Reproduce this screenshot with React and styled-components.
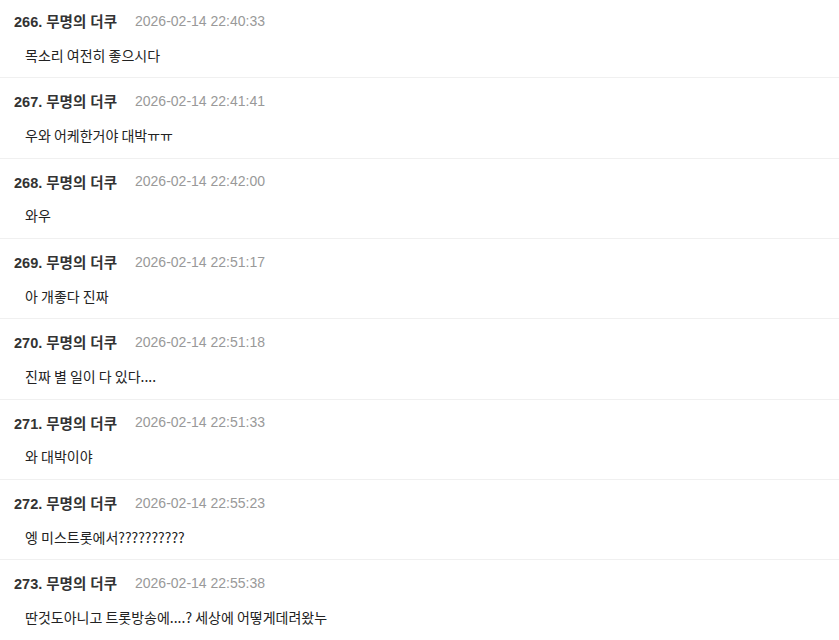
import styled, { createGlobalStyle } from "styled-components";

const Global = createGlobalStyle`
  body {
    margin: 0;
    background: #fff;
    font-family: "Noto Sans CJK KR", "Liberation Sans", sans-serif;
  }
`;

const List = styled.ul`
  list-style: none;
  margin: -2px 0 0;
  padding: 0;
`;

const Item = styled.li`
  padding: 12.67px 14px;
  border-bottom: 1px solid #f0f0f0;
`;

const Head = styled.div`
  display: flex;
  align-items: center;
  gap: 18px;
  height: 20px;
`;

const Name = styled.span`
  font-family: "Liberation Sans", "Noto Sans CJK KR", sans-serif;
  font-size: 14.5px;
  font-weight: 700;
  color: #333;
`;

const Date = styled.span`
  font-family: "Liberation Sans", sans-serif;
  font-size: 14px;
  color: #999;
`;

const Text = styled.p`
  margin: 14px 0 0 11px;
  height: 20px;
  line-height: 20px;
  font-size: 14px;
  color: #222;
`;

const comments = [
  [266, "2026-02-14 22:40:33", "목소리 여전히 좋으시다"],
  [267, "2026-02-14 22:41:41", "우와 어케한거야 대박ㅠㅠ"],
  [268, "2026-02-14 22:42:00", "와우"],
  [269, "2026-02-14 22:51:17", "아 개좋다 진짜"],
  [270, "2026-02-14 22:51:18", "진짜 별 일이 다 있다...."],
  [271, "2026-02-14 22:51:33", "와 대박이야"],
  [272, "2026-02-14 22:55:23", "엥 미스트롯에서??????????"],
  [273, "2026-02-14 22:55:38", "딴것도아니고 트롯방송에....? 세상에 어떻게데려왔누"],
];

export default function App() {
  return (
    <>
      <Global />
      <List>
        {comments.map(([n, d, t]) => (
          <Item key={n}>
            <Head>
              <Name>{n}. 무명의 더쿠</Name>
              <Date>{d}</Date>
            </Head>
            <Text>{t}</Text>
          </Item>
        ))}
      </List>
    </>
  );
}
